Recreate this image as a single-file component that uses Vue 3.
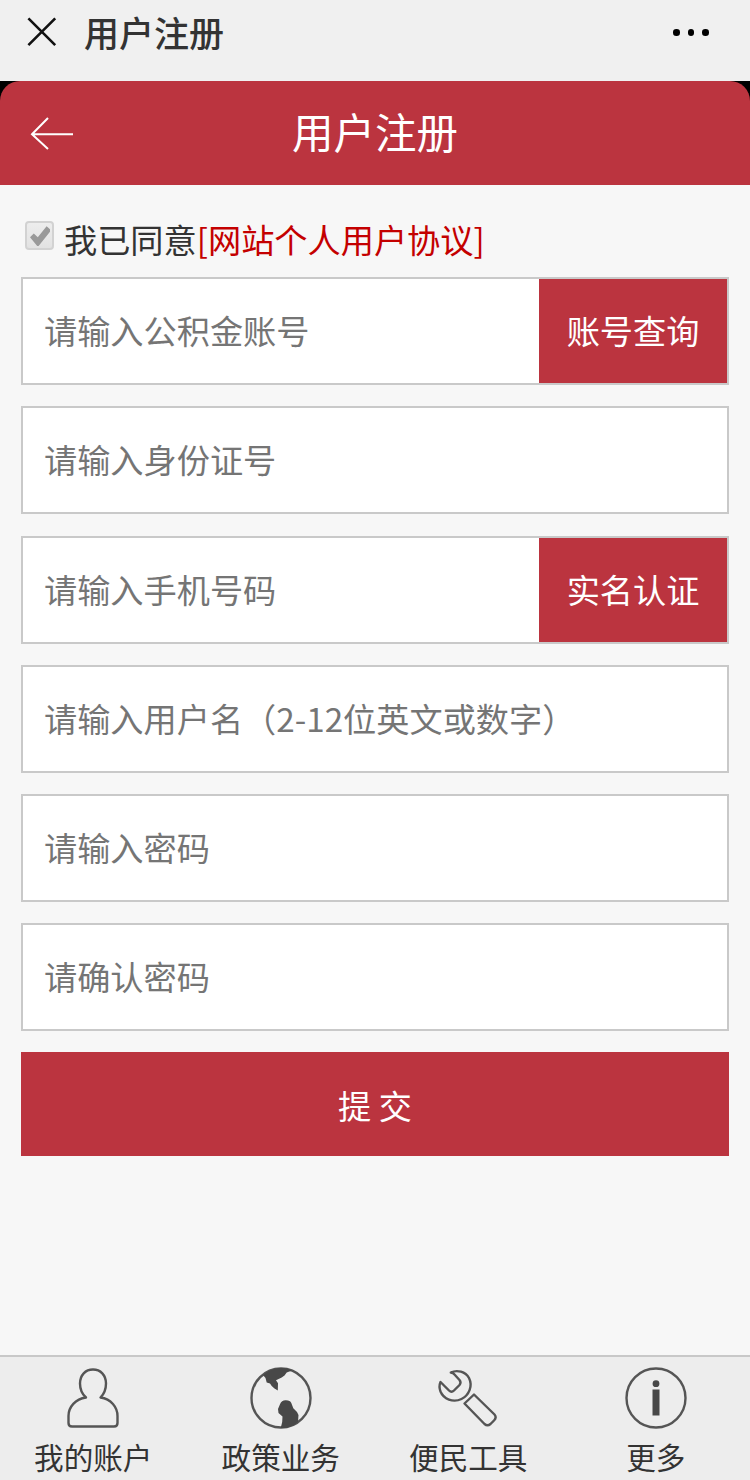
<template>
  <div class="page">
    <div class="webview-bar">
      <button type="button" class="webview-bar__close" aria-label="关闭">
        <svg viewBox="0 0 30 30" width="30" height="30">
          <path d="M1.4 1.4 28.2 28.2M28.2 1.4 1.4 28.2" />
        </svg>
      </button>
      <span class="webview-bar__title">用户注册</span>
      <button type="button" class="webview-bar__more" aria-label="菜单">
        <i></i><i></i><i></i>
      </button>
    </div>

    <div class="header-wrap">
      <header class="header">
        <button type="button" class="header__back" aria-label="返回">
          <svg viewBox="0 0 44 34" width="44" height="34">
            <path d="M18 1 2 17.2 18 32M2 17.2H43" />
          </svg>
        </button>
        <h1 class="header__title">用户注册</h1>
      </header>
    </div>

    <form class="form" @submit.prevent>
      <div class="agree">
        <span class="agree__box" @click="agreed = !agreed">
          <svg v-if="agreed" viewBox="0 0 22 22" width="22" height="22">
            <path d="M1 12.2 4.8 8.4 8.8 12.2 17.6 1.3 21 4.3V6.8L9.6 21H8.2Z" />
          </svg>
        </span>
        <span class="agree__text">我已同意</span>
        <a class="agree__link">[网站个人用户协议]</a>
      </div>

      <div v-for="item in fields" :key="item.key" class="field">
        <input
          v-model="form[item.key]"
          class="field__input"
          :type="item.type"
          :placeholder="item.placeholder"
        />
        <button v-if="item.action" type="button" class="field__btn">{{ item.action }}</button>
      </div>

      <button type="submit" class="submit">提 交</button>
    </form>

    <nav class="tabbar">
      <a class="tabbar__item">
        <svg class="tabbar__icon" viewBox="0 0 64 64">
          <path
            d="M25 31.5C21 28 19 22.5 19 17.5C19 9 24.5 3.5 32 3.5S45 9 45 17.5C45 22.5 43 28 39.5 31.5C50 33 56.5 41 56.5 50V57Q56.5 60.5 53 60.5H11Q7.5 60.5 7.5 57V50C7.5 41 14.5 33 25 31.5Z"
          />
        </svg>
        <span>我的账户</span>
      </a>
      <a class="tabbar__item">
        <svg class="tabbar__icon" viewBox="0 0 64 64">
          <circle cx="32" cy="32" r="29.5" />
          <path
            class="solid"
            d="M14 9C20 4 26 2 32 2C36 2 40 2.8 43 4.5L37.7 6.5L35.5 9.5L32.7 11.5L27 14.3L29 17.3L28.8 24.5L25.500 22.500L22.7 20L21 17.5L17.7 16.5L16.5 12ZM31 38.3C32 35 34.5 34 37 34.2C40 34.3 41.5 35.2 42.3 37L44.3 42.3L48 46L49.5 49L49 56C44.5 60 39 62 31.7 62L33.2 56L33.5 50.5L29.5 47L29 43Z"
          />
        </svg>
        <span>政策业务</span>
      </a>
      <a class="tabbar__item">
        <svg class="tabbar__icon" viewBox="0 0 64 64">
          <path
            d="M14.8 6.5C21 3.5 29.5 5.5 33 12C37 20 33 29.5 25.5 33C17 37 7.5 33 4.5 25.5C3.2 22 3.2 19 4.5 16L13 24.5Q15.5 27 18 24.500L23.5 19Q25.5 16.5 23.5 14L18.5 8.5Q17.5 7 14.8 6.5ZM28.5 37.5 38 28.500 58.5 48.500Q61 51.500 58 54.500L54.500 58Q51.500 60.500 48.500 58Z"
          />
        </svg>
        <span>便民工具</span>
      </a>
      <a class="tabbar__item">
        <svg class="tabbar__icon" viewBox="0 0 64 64">
          <circle cx="32" cy="32" r="29.5" />
          <circle class="solid" cx="32" cy="17.7" r="3.4" />
          <path class="solid" d="M28.5 23.5H35.5V49.5H28.5Z" />
        </svg>
        <span>更多</span>
      </a>
    </nav>
  </div>
</template>

<script setup>
import { reactive, ref } from 'vue'

const agreed = ref(true)

const form = reactive({
  account: '',
  idCard: '',
  phone: '',
  username: '',
  password: '',
  confirm: '',
})

const fields = [
  { key: 'account', type: 'text', placeholder: '请输入公积金账号', action: '账号查询' },
  { key: 'idCard', type: 'text', placeholder: '请输入身份证号' },
  { key: 'phone', type: 'tel', placeholder: '请输入手机号码', action: '实名认证' },
  { key: 'username', type: 'text', placeholder: '请输入用户名（2-12位英文或数字）' },
  { key: 'password', type: 'password', placeholder: '请输入密码' },
  { key: 'confirm', type: 'password', placeholder: '请确认密码' },
]
</script>

<style>
body {
  background: #f7f7f7;
}
</style>

<style scoped>
.page {
  display: flex;
  flex-direction: column;
  width: 100%;
  height: 100vh;
  background: #f7f7f7;
  color: #333;
  font-family: 'Noto Sans CJK SC', sans-serif;
  font-size: 33.2px;
  overflow: hidden;
}

button,
input {
  margin: 0;
  padding: 0;
  border: 0;
  border-radius: 0;
  background: none;
  font: inherit;
  outline: none;
}

svg {
  display: block;
  fill: none;
}

.webview-bar {
  display: flex;
  align-items: center;
  flex: none;
  box-sizing: border-box;
  height: 81px;
  padding: 0 41px 17px 27px;
  background: #f0f0f0;
}

.webview-bar__close svg {
  stroke: #111;
  stroke-width: 2.6;
}

.webview-bar__title {
  flex: 1;
  margin-left: 27px;
  font-size: 35px;
  font-weight: 500;
  line-height: 64px;
}

.webview-bar__more {
  display: flex;
  gap: 8px;
  padding-top: 1px;
}

.webview-bar__more i {
  width: 6.6px;
  height: 6.6px;
  border-radius: 50%;
  background: #000;
}

/* 圆角外露出黑色底 */
.header-wrap {
  flex: none;
  background: #000;
}

.header {
  display: grid;
  grid-template-columns: 100px 1fr 100px;
  align-items: center;
  height: 104px;
  border-radius: 20px 20px 0 0;
  background: #bb343f;
}

.header__back {
  padding: 2px 0 0 30px;
}

.header__back svg {
  stroke: #fff;
  stroke-width: 2;
}

.header__title {
  margin: 0;
  padding-bottom: 4px;
  color: #fff;
  font-size: 41.5px;
  font-weight: 400;
  line-height: 100px;
  text-align: center;
}

.form {
  display: flex;
  flex-direction: column;
  flex: 1;
  gap: 21.2px;
  padding: 0 21px;
}

.agree {
  display: flex;
  align-items: center;
  box-sizing: border-box;
  height: 71px;
  padding: 36px 0 0 4px;
  line-height: 50px;
}

.agree__box {
  display: flex;
  align-items: center;
  justify-content: center;
  box-sizing: border-box;
  width: 29px;
  height: 29px;
  margin: 0 10px 6px 0;
  border: 2px solid #d2d2d2;
  border-radius: 4px;
  background: linear-gradient(#ededed, #e2e2e2);
}

.agree__box svg {
  flex: none;
  fill: #999;
}

.agree__link {
  color: #c40000;
}

.field {
  display: flex;
  flex: none;
  box-sizing: border-box;
  height: 108px;
  border: 2px solid #c9c9c9;
  background: #fff;
}

.field__input {
  flex: 1;
  min-width: 0;
  padding: 0 21px 3px;
  color: #333;
}

.field__input::placeholder {
  color: #757575;
  opacity: 1;
}

.field__btn {
  flex: none;
  width: 188px;
  padding-bottom: 3px;
  background: #bb343f;
  color: #fff;
}

.submit {
  flex: none;
  height: 104px;
  background: #bb343f;
  color: #fff;
}

.tabbar {
  display: grid;
  grid-template-columns: repeat(4, 1fr);
  flex: none;
  box-sizing: border-box;
  height: 125px;
  border-top: 2px solid #c8c8c8;
  background: #ededed;
}

.tabbar__item {
  display: flex;
  flex-direction: column;
  align-items: center;
  padding: 8.5px 1px 0 0;
  font-size: 29.6px;
  line-height: 44px;
}

.tabbar__item span {
  margin-top: 5px;
}

.tabbar__icon {
  width: 64px;
  height: 64px;
  stroke: #555;
  stroke-width: 2.4;
  stroke-linejoin: round;
}

.tabbar__icon .solid {
  fill: #484848;
  stroke: none;
}
</style>
